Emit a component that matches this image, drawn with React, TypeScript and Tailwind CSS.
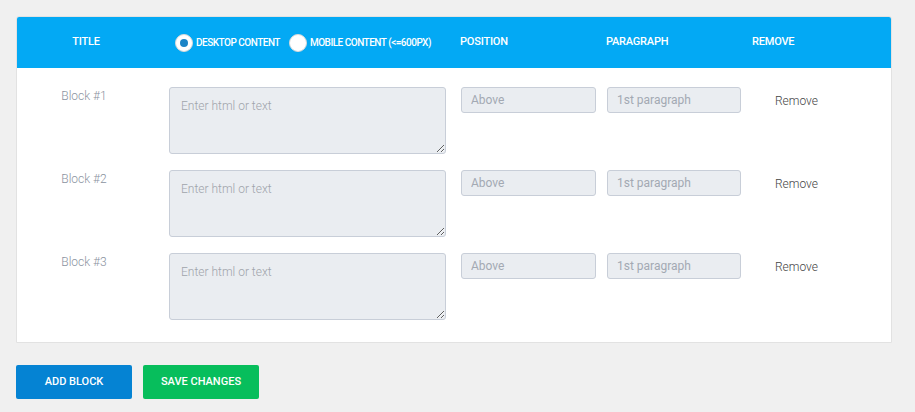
import React from "react";

const font = { fontFamily: "Roboto, 'Liberation Sans', sans-serif" };

function Row({ n }: { n: number }) {
  return (
    <div className="flex items-start">
      <div className="w-[134px] pt-[1px] text-center text-[12px] font-light leading-[16px] text-[#8a92a0]">Block #{n}</div>
      <textarea
        placeholder="Enter html or text"
        className="ml-[18px] w-[277px] h-[67px] rounded-[3px] border border-[#c8ced8] bg-[#eaedf1] px-[11px] py-[9px] text-[12px] font-light text-[#555] placeholder:text-[#a0a4ab] outline-none"
        style={font}
      />
      <input
        placeholder="Above"
        className="ml-[15px] w-[135px] h-[26px] rounded-[3px] border border-[#c8ced8] bg-[#eaedf1] px-[9px] text-[12px] placeholder:text-[#a3a9b3] outline-none"
        style={font}
      />
      <input
        placeholder="1st paragraph"
        className="ml-[11px] w-[134px] h-[26px] rounded-[3px] border border-[#c8ced8] bg-[#eaedf1] px-[9px] text-[12px] placeholder:text-[#a3a9b3] outline-none"
        style={font}
      />
      <div className="ml-[34px] pt-[6px] text-[12px] font-light leading-[16px] text-[#444]">Remove</div>
    </div>
  );
}

export default function App() {
  return (
    <div className="min-h-[412px] w-full bg-[#f0f0f0] p-[16px]" style={font}>
      <div className="w-[876px] rounded-t-[3px] border border-[#e2e2e2] bg-white">
        <div className="flex h-[51px] items-center rounded-t-[2px] bg-[#03a9f4] text-[11px] font-medium uppercase text-white tracking-[-0.2px]">
          <div className="w-[138px] text-center">Title</div>
          <div className="ml-[20px] flex w-[285px] items-center">
            <span className="flex h-[18px] w-[18px] items-center justify-center rounded-full border border-[#d8d8d8] bg-white">
              <span className="h-[8px] w-[8px] rounded-full bg-[#1c84c6]" />
            </span>
            <span className="ml-[3px] text-[10px] tracking-[-0.5px]">Desktop content</span>
            <span className="ml-[9px] h-[18px] w-[18px] rounded-full border border-[#d8d8d8] bg-white" />
            <span className="ml-[3px] text-[10px] tracking-[-0.5px]">Mobile content (&lt;=600px)</span>
          </div>
          <div className="w-[146px]">Position</div>
          <div className="w-[146px]">Paragraph</div>
          <div>Remove</div>
        </div>
        <div className="flex flex-col gap-[16px] pt-[19px] pb-[22px]">
          <Row n={1} />
          <Row n={2} />
          <Row n={3} />
        </div>
      </div>
      <div className="mt-[22px] flex gap-[11px]">
        <button className="h-[34px] w-[116px] rounded-[2px] bg-[#0583d3] text-[11px] font-medium uppercase text-white">Add block</button>
        <button className="h-[34px] w-[116px] rounded-[2px] bg-[#07be5c] text-[11px] font-medium uppercase text-white">Save changes</button>
      </div>
    </div>
  );
}
